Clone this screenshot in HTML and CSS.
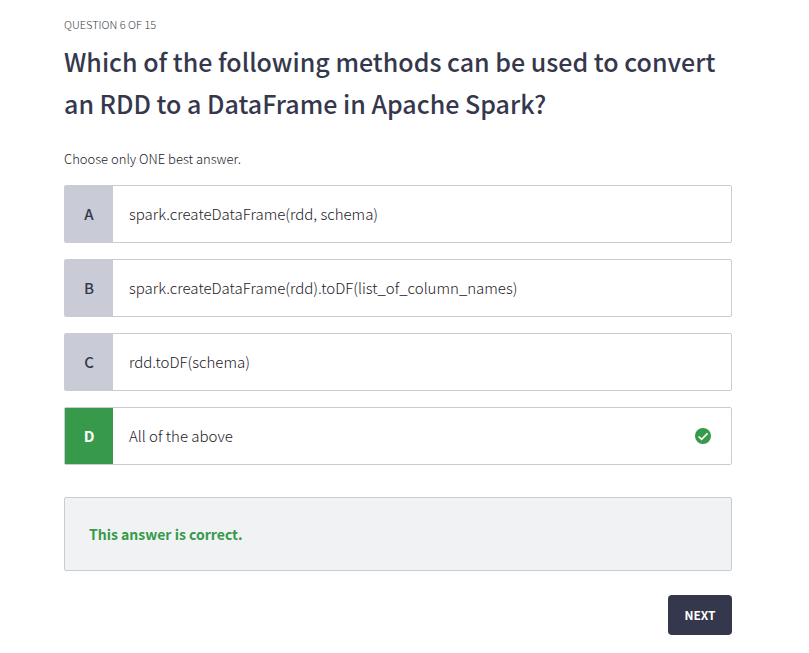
FILE: index.html
```html
<!DOCTYPE html>
<html lang="en">
<head>
<meta charset="utf-8">
<meta name="viewport" content="width=device-width, initial-scale=1">
<title>Question 6 of 15</title>
<link rel="stylesheet" href="styles.css">
</head>
<body>
<main class="quiz">
  <p class="progress">QUESTION 6 OF 15</p>
  <h1 class="question">Which of the following methods can be used to convert an RDD to a DataFrame in Apache Spark?</h1>
  <p class="hint">Choose only ONE best answer.</p>
  <div class="answers">
    <button type="button" class="answer"><span class="letter">A</span><span class="text">spark.createDataFrame(rdd, schema)</span></button>
    <button type="button" class="answer"><span class="letter">B</span><span class="text">spark.createDataFrame(rdd).toDF(list_of_column_names)</span></button>
    <button type="button" class="answer"><span class="letter">C</span><span class="text">rdd.toDF(schema)</span></button>
    <button type="button" class="answer correct"><span class="letter">D</span><span class="text">All of the above</span>
      <svg class="check" viewBox="0 0 16 16" aria-hidden="true"><circle cx="8" cy="8" r="8" fill="#369a4a"/><path d="M3.6 8.5 6.6 11.4 12.6 5.4" fill="none" stroke="#fff" stroke-width="1.7"/></svg>
    </button>
  </div>
  <p class="result">This answer is correct.</p>
  <div class="actions"><button type="button" class="next">NEXT</button></div>
</main>
</body>
</html>
```
FILE: styles.css
```css
* { box-sizing: border-box; }
body {
  margin: 0;
  background: #fff;
  color: #35384c;
  font-family: "Noto Sans CJK JP", "Noto Sans", sans-serif;
}
button { font: inherit; color: inherit; cursor: pointer; }
.quiz { padding: 16px 77px 18px 64px; }
.progress { margin: 0; font-size: 11px; line-height: 16px; font-weight: 300; color: #3c3e48; }
.question { margin: 8px 0 0; font-size: 25px; line-height: 42px; font-weight: 500; }
.hint { margin: 25px 0 0; font-size: 13px; line-height: 20px; font-weight: 300; color: #1e2028; }
.answers { display: grid; gap: 16px; margin-top: 16px; }
.answer {
  display: flex;
  align-items: center;
  min-height: 58px;
  padding: 0;
  border: 1px solid #c9cbd6;
  border-radius: 2px;
  background: #fff;
  text-align: left;
  font-size: 15px;
  line-height: 24px;
}
.letter {
  display: flex;
  align-items: center;
  justify-content: center;
  align-self: stretch;
  width: 48px;
  background: #c9cbd6;
  font-weight: 500;
}
.text { flex: 1; padding: 0 16px; font-weight: 300; color: #1e2028; }
.correct .letter { background: #369a4a; color: #fff; font-weight: 700; }
.check { width: 16px; height: 16px; margin-right: 20px; }
.result {
  margin: 32px 0 0;
  padding: 24px;
  border: 1px solid #c9cbd6;
  border-radius: 2px;
  background: #f1f2f4;
  color: #369a4a;
  font-size: 14px;
  line-height: 24px;
  font-weight: 700;
}
.actions { display: flex; justify-content: flex-end; margin-top: 24px; }
.next {
  min-width: 64px;
  height: 40px;
  padding: 0 12px 2px;
  border: 0;
  border-radius: 4px;
  background: #35384c;
  color: #fff;
  font-size: 12px;
  font-weight: 700;
}
```
